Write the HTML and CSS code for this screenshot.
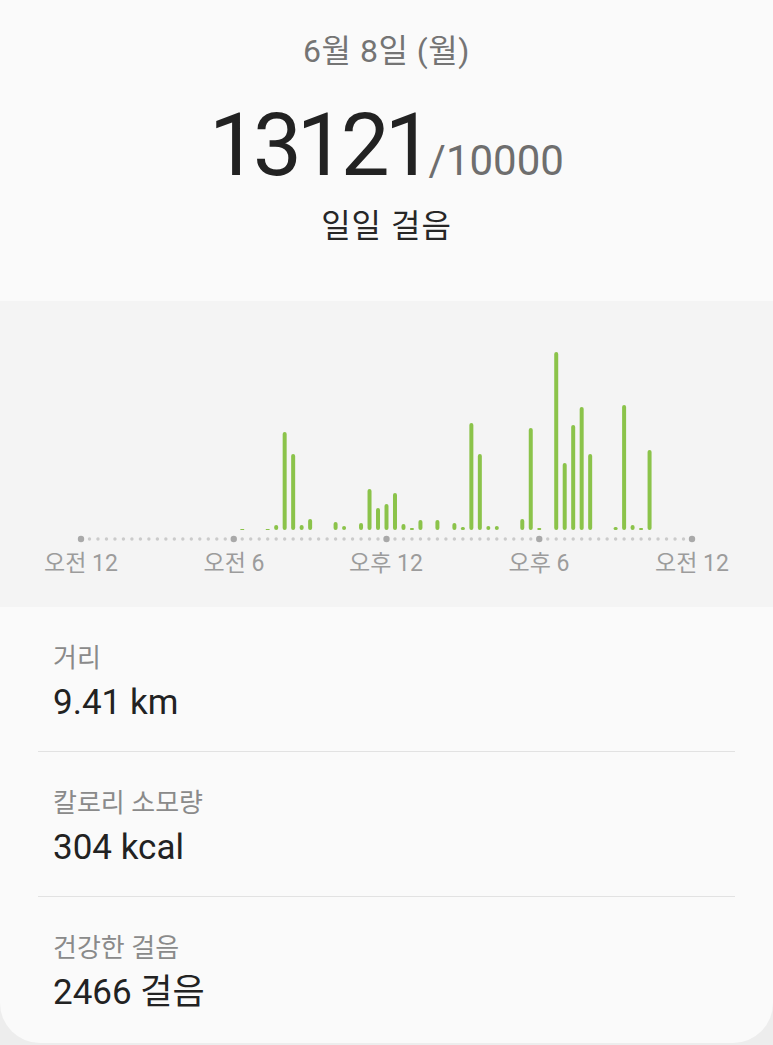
FILE: index.html
```html
<!DOCTYPE html>
<html lang="ko">
<head>
    <meta charset="UTF-8">
    <meta name="viewport" content="width=device-width, initial-scale=1.0">
    <title>일일 걸음</title>
    <link rel="stylesheet" href="styles.css">
</head>
<body>
    <div class="card">
        <div class="summary">
            <div class="date">6월 8일 (월)</div>
            <div class="count"><span class="steps">13121</span><span class="goal">/10000</span></div>
            <div class="caption">일일 걸음</div>
        </div>

        <div class="chart">
            <svg id="chart" width="773" height="306" viewBox="0 0 773 306">
                <g id="axis"></g>
                <g id="bars"></g>
                <g class="axis-labels">
                    <text x="81" y="270">오전 12</text>
                    <text x="234" y="270">오전 6</text>
                    <text x="386" y="270">오후 12</text>
                    <text x="539" y="270">오후 6</text>
                    <text x="692" y="270">오전 12</text>
                </g>
            </svg>
        </div>

        <div class="stats">
            <div class="stat">
                <div class="stat-label">거리</div>
                <div class="stat-value">9.41 km</div>
            </div>
            <div class="stat">
                <div class="stat-label">칼로리 소모량</div>
                <div class="stat-value">304 kcal</div>
            </div>
            <div class="stat">
                <div class="stat-label">건강한 걸음</div>
                <div class="stat-value">2466 걸음</div>
            </div>
        </div>
    </div>

    <script>
        const NS = "http://www.w3.org/2000/svg";
        const left = 81, right = 692, baseY = 229, axisY = 238;
        const slots = 72; // 20 minute bins
        const step = (right - left) / slots;

        // [bin, height in px]
        const steps = [
            [19, 1], [22, 1], [23, 5], [24, 98], [25, 76], [26, 5], [27, 11],
            [30, 8], [31, 4], [33, 7], [34, 41], [35, 22], [36, 26], [37, 37],
            [38, 6], [39, 2], [40, 10], [42, 10], [44, 7], [45, 3], [46, 107],
            [47, 76], [48, 4], [49, 4], [52, 11], [53, 102], [54, 2], [56, 178],
            [57, 67], [58, 105], [59, 123], [60, 76], [63, 3], [64, 125],
            [65, 5], [66, 2], [67, 80]
        ];

        const axis = document.getElementById("axis");
        for (let i = 0; i <= slots; i++) {
            const big = i % 18 === 0;
            const dot = document.createElementNS(NS, "circle");
            dot.setAttribute("cx", left + i * step);
            dot.setAttribute("cy", axisY);
            dot.setAttribute("r", big ? 3.2 : 1.7);
            dot.setAttribute("class", big ? "tick-major" : "tick-minor");
            axis.appendChild(dot);
        }

        const bars = document.getElementById("bars");
        steps.forEach(([bin, h]) => {
            const bar = document.createElementNS(NS, "rect");
            bar.setAttribute("x", left + bin * step - 2);
            bar.setAttribute("y", baseY - h);
            bar.setAttribute("width", 4);
            bar.setAttribute("height", h);
            bar.setAttribute("rx", Math.min(2, h / 2));
            bar.setAttribute("class", "bar");
            bars.appendChild(bar);
        });
    </script>
</body>
</html>
```

FILE: styles.css
```css
body {
    margin: 0;
    background: #ededed;
    font-family: Roboto, "Noto Sans CJK KR", sans-serif;
}
.card {
    width: 773px;
    background: #fafafa;
    border-radius: 0 0 40px 40px;
    overflow: hidden;
}
.summary {
    display: flex;
    flex-direction: column;
    align-items: center;
    height: 301px;
    box-sizing: border-box;
    padding-top: 31px;
}
.date {
    font-size: 32px;
    line-height: 40px;
    letter-spacing: 0.5px;
    color: #747474;
}
.count {
    margin-top: 24px;
    font-size: 87px;
    line-height: 100px;
    white-space: nowrap;
}
.steps {
    color: #222;
    letter-spacing: -5px;
}
.goal {
    font-size: 42px;
    line-height: 1;
    color: #6e6e6e;
}
.caption {
    margin-top: 11px;
    font-size: 32px;
    line-height: 40px;
    letter-spacing: 1px;
    color: #262626;
}
.chart {
    height: 306px;
    background: #f4f4f4;
}
.chart svg {
    display: block;
}
.tick-minor {
    fill: #cbcbcb;
}
.tick-major {
    fill: #a9a9a9;
}
.bar {
    fill: #8bc34a;
}
.axis-labels text {
    font-family: Roboto, "Noto Sans CJK KR", sans-serif;
    font-size: 23px;
    fill: #9c9c9c;
    text-anchor: middle;
}
.stats {
    padding: 0 38px;
}
.stat {
    height: 145px;
    box-sizing: border-box;
    padding: 34px 15px 0;
    border-bottom: 1px solid #e2e2e2;
}
.stat:last-child {
    height: 146px;
    border-bottom: none;
}
.stat-label {
    font-size: 26px;
    line-height: 34px;
    color: #8a8a8a;
}
.stat-value {
    margin-top: 6px;
    font-size: 35px;
    line-height: 44px;
    color: #222;
}
```
